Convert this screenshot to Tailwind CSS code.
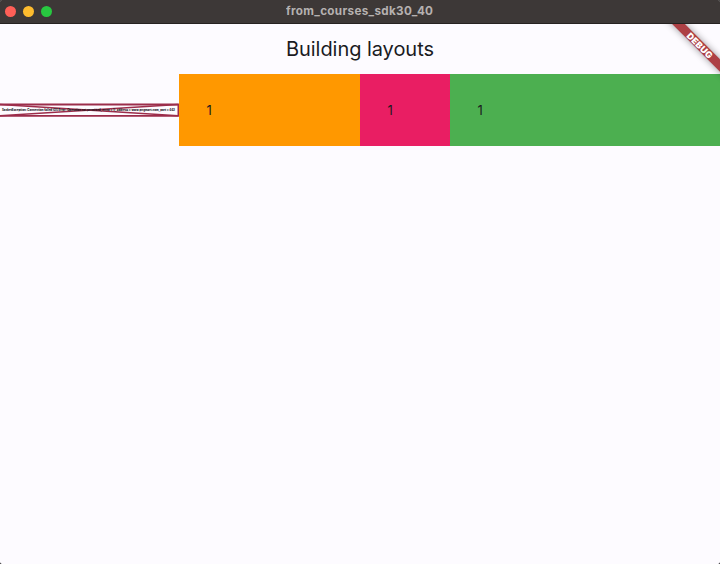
<!DOCTYPE html>
<html lang="en">
<head>
<meta charset="utf-8">
<title>from_courses_sdk30_40</title>
<script src="https://cdn.jsdelivr.net/npm/@tailwindcss/browser@4"></script>
</head>
<body class="bg-black">
<div class="relative flex h-[564px] w-[720px] flex-col overflow-hidden rounded-[2px] bg-[#fdfbff] font-[Inter,'Liberation_Sans',sans-serif] text-[#1b1b1f]">
  <header class="grid h-6 shrink-0 grid-cols-[1fr_auto_1fr] items-center border-b border-[#262221] bg-[#3d3837] px-[5px]">
    <div class="flex gap-[7px] pb-px pl-[0.4px]">
      <span class="size-[11px] rounded-full bg-[#ff5f57]"></span>
      <span class="size-[11px] rounded-full bg-[#febc2e]"></span>
      <span class="size-[11px] rounded-full bg-[#28c840]"></span>
    </div>
    <svg width="148" height="22" class="block"><text x="0" y="14" textLength="147" font-size="11.7" font-weight="700" fill="#b5b1b0">from_courses_sdk30_40</text></svg>
  </header>
  <main>
    <h1 class="flex h-[50px] justify-center">
      <svg width="148" height="50" class="block"><text x="0" y="32" textLength="148" font-size="20" fill="#1b1b1f">Building layouts</text></svg>
    </h1>
    <section class="flex h-[72px] items-center text-[13px]">
      <svg width="179" height="14" viewBox="0 0 179 14" class="block shrink-0 overflow-visible">
        <g fill="none" stroke="#9c2d4b">
          <path d="M0 1.5H178.4V12.8H0" stroke-width="1.8"/>
          <path d="M0 1.5L178 12.8M0 12.8L178 1.5" stroke-width="1.6"/>
        </g>
        <text x="2" y="8.2" textLength="173" lengthAdjust="spacingAndGlyphs" font-size="3" font-weight="800" fill="#17151b">SocketException: Connection failed (OS Error: Operation not permitted, errno = 1), address = www.pngmart.com, port = 443</text>
      </svg>
      <div class="flex h-full w-[181px] items-center bg-[#ff9800] pt-[2px] pl-[27.5px]">1</div>
      <div class="flex h-full w-[90px] items-center bg-[#e91e63] pt-[2px] pl-[27.5px]">1</div>
      <div class="flex h-full flex-1 items-center bg-[#4caf50] pt-[2px] pl-[27.5px]">1</div>
    </section>
  </main>
  <div class="absolute top-6 right-0 size-[60px] overflow-hidden">
    <div class="absolute top-[16.5px] left-[-10.5px] flex h-[9px] w-[100px] rotate-45 items-center justify-center bg-[#ad4045] text-[9px] font-black leading-none tracking-[0.2px] text-white shadow-[0_0_7px_rgba(0,0,0,0.4)]">DEBUG</div>
  </div>
</div>
</body>
</html>
